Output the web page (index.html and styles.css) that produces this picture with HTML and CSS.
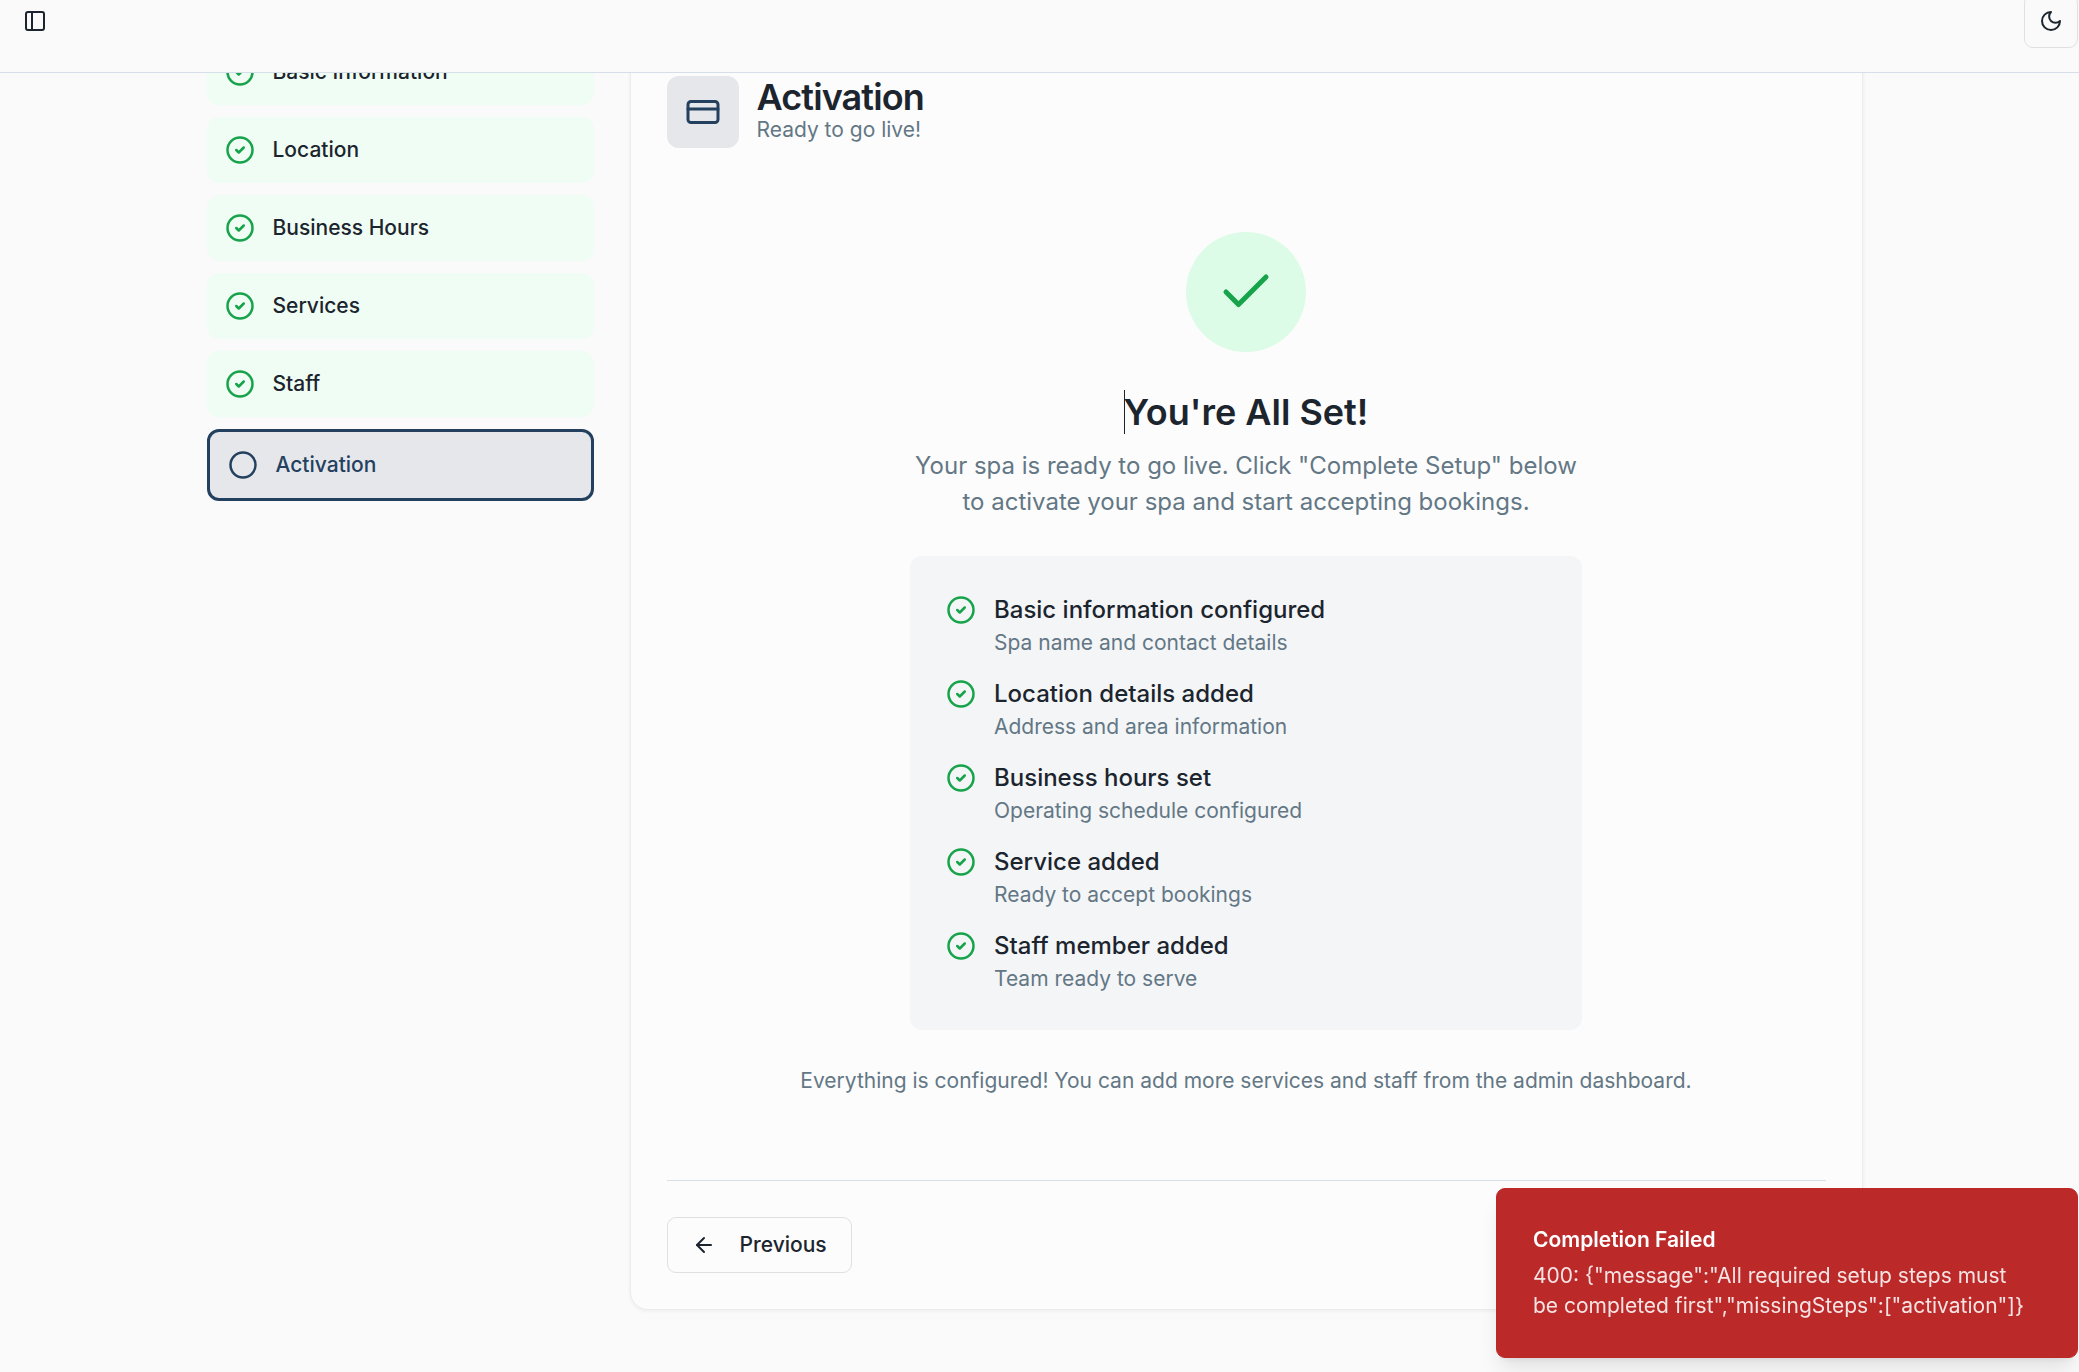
FILE: index.html
```html
<!DOCTYPE html>
<html lang="en">
<head>
<meta charset="utf-8">
<meta name="viewport" content="width=device-width, initial-scale=1">
<title>Spa Setup – Activation</title>
<link rel="stylesheet" href="styles.css">
</head>
<body>
<svg class="sprite" aria-hidden="true">
  <symbol id="i-check-circle" viewBox="0 0 24 24"><circle cx="12" cy="12" r="10"/><path d="m9 12 2 2 4-4"/></symbol>
  <symbol id="i-circle" viewBox="0 0 24 24"><circle cx="12" cy="12" r="10"/></symbol>
  <symbol id="i-check" viewBox="0 0 24 24"><path d="M20 6 9 17l-5-5"/></symbol>
  <symbol id="i-card" viewBox="0 0 24 24"><rect width="20" height="14" x="2" y="5" rx="2"/><path d="M2 10h20"/></symbol>
  <symbol id="i-panel" viewBox="0 0 24 24"><rect width="18" height="18" x="3" y="3" rx="2"/><path d="M9 3v18"/></symbol>
  <symbol id="i-moon" viewBox="0 0 24 24"><path d="M12 3a6 6 0 0 0 9 9 9 9 0 1 1-9-9Z"/></symbol>
  <symbol id="i-arrow-left" viewBox="0 0 24 24"><path d="m12 19-7-7 7-7"/><path d="M19 12H5"/></symbol>
</svg>

<header class="topbar">
  <button class="icon-btn" type="button" aria-label="Toggle sidebar"><svg class="icon icon-sm"><use href="#i-panel"/></svg></button>
  <button class="icon-btn icon-btn-outline" type="button" aria-label="Toggle theme"><svg class="icon icon-sm"><use href="#i-moon"/></svg></button>
</header>

<main class="viewport">
  <div class="wizard">
    <nav class="steps" aria-label="Setup steps">
      <button class="step" type="button"><svg class="icon"><use href="#i-check-circle"/></svg><span>Basic Information</span></button>
      <button class="step" type="button"><svg class="icon"><use href="#i-check-circle"/></svg><span>Location</span></button>
      <button class="step" type="button"><svg class="icon"><use href="#i-check-circle"/></svg><span>Business Hours</span></button>
      <button class="step" type="button"><svg class="icon"><use href="#i-check-circle"/></svg><span>Services</span></button>
      <button class="step" type="button"><svg class="icon"><use href="#i-check-circle"/></svg><span>Staff</span></button>
      <button class="step step-current" type="button" aria-current="step"><svg class="icon"><use href="#i-circle"/></svg><span>Activation</span></button>
    </nav>

    <section class="card">
      <div class="card-head">
        <div class="card-badge"><svg class="icon icon-md"><use href="#i-card"/></svg></div>
        <div>
          <h1 class="card-title">Activation</h1>
          <p class="small">Ready to go live!</p>
        </div>
      </div>

      <div class="summary">
        <div class="success"><svg class="icon icon-xl"><use href="#i-check"/></svg></div>
        <h2 class="summary-title"><span class="caret"></span>You're All Set!</h2>
        <p class="lead">Your spa is ready to go live. Click "Complete Setup" below to activate your spa and start accepting bookings.</p>
        <ul class="checklist">
          <li class="check-item"><svg class="icon"><use href="#i-check-circle"/></svg><div><p class="check-title">Basic information configured</p><p class="small">Spa name and contact details</p></div></li>
          <li class="check-item"><svg class="icon"><use href="#i-check-circle"/></svg><div><p class="check-title">Location details added</p><p class="small">Address and area information</p></div></li>
          <li class="check-item"><svg class="icon"><use href="#i-check-circle"/></svg><div><p class="check-title">Business hours set</p><p class="small">Operating schedule configured</p></div></li>
          <li class="check-item"><svg class="icon"><use href="#i-check-circle"/></svg><div><p class="check-title">Service added</p><p class="small">Ready to accept bookings</p></div></li>
          <li class="check-item"><svg class="icon"><use href="#i-check-circle"/></svg><div><p class="check-title">Staff member added</p><p class="small">Team ready to serve</p></div></li>
        </ul>
        <p class="small">Everything is configured! You can add more services and staff from the admin dashboard.</p>
      </div>

      <div class="card-foot">
        <button class="btn" type="button"><svg class="icon icon-sm"><use href="#i-arrow-left"/></svg>Previous</button>
      </div>
    </section>
  </div>
</main>

<div class="toast" role="alert">
  <p class="toast-title">Completion Failed</p>
  <p class="toast-text">400: {"message":"All required setup steps must be completed first","missingSteps":["activation"]}</p>
</div>
</body>
</html>
```
FILE: styles.css
```css
:root {
  --bg: #fafafa;
  --card: #fcfcfc;
  --text: #1c252e;
  --muted: #637785;
  --primary: #23415f;
  --tint: #e6e7eb;
  --line: #d6dfe7;
  --edge: #e0e0e0;
  --green: #16a34a;
}

*, *::before, *::after { box-sizing: border-box; }

body {
  margin: 0;
  height: 100vh;
  display: flex;
  flex-direction: column;
  overflow: hidden;
  background: var(--bg);
  color: var(--text);
  font: 400 24px/36px Inter, "Liberation Sans", sans-serif;
}

h1, h2, p, ul { margin: 0; padding: 0; }
ul { list-style: none; }
button { font: inherit; color: inherit; cursor: pointer; }

.sprite { display: none; }

.icon {
  flex: none;
  width: 30px;
  height: 30px;
  fill: none;
  stroke: currentColor;
  stroke-width: 2;
  stroke-linecap: round;
  stroke-linejoin: round;
}
.icon-sm { width: 24px; height: 24px; }
.icon-md { width: 36px; height: 36px; }
.icon-xl { width: 60px; height: 60px; }

.small {
  font-size: 21px;
  line-height: 30px;
  color: var(--muted);
}

.topbar {
  flex: none;
  display: flex;
  align-items: center;
  justify-content: space-between;
  margin-top: -6px;
  padding: 0 1px 24px 8px;
  border-bottom: 1px solid var(--line);
}
.icon-btn {
  display: grid;
  place-items: center;
  width: 54px;
  height: 54px;
  padding: 0;
  border: 1px solid transparent;
  border-radius: 9px;
  background: none;
}
.icon-btn-outline { border-color: var(--edge); }

.viewport {
  flex: 1;
  min-height: 0;
  overflow: hidden;
  padding-right: 10px;
}
.wizard {
  display: grid;
  grid-template-columns: repeat(4, minmax(0, 1fr));
  gap: 36px;
  align-items: start;
  max-width: 1728px;
  margin: -34px auto 0;
  padding: 0 36px;
}

.steps {
  display: flex;
  flex-direction: column;
  gap: 12px;
}
.step {
  display: flex;
  align-items: center;
  gap: 18px;
  padding: 18px;
  border: 0;
  border-radius: 12px;
  background: #f0fdf4;
  font-size: 21px;
  font-weight: 500;
  line-height: 30px;
  text-align: left;
}
.step .icon { color: var(--green); }
.step-current {
  border: 3px solid var(--primary);
  background: var(--tint);
  color: var(--primary);
}
.step-current .icon { color: inherit; }

.card {
  grid-column: span 3;
  padding: 36px;
  border: 1px solid #ececec;
  border-radius: 18px;
  background: var(--card);
  box-shadow: 0 1px 4px rgba(0, 0, 0, 0.06);
}
.card-head {
  display: flex;
  align-items: center;
  gap: 18px;
}
.card-badge {
  display: grid;
  place-items: center;
  width: 72px;
  height: 72px;
  border-radius: 12px;
  background: var(--tint);
  color: var(--primary);
}
.card-title {
  font-size: 36px;
  font-weight: 600;
  line-height: 36px;
  letter-spacing: -0.025em;
}

.summary {
  display: flex;
  flex-direction: column;
  align-items: center;
  padding: 84px 0;
  text-align: center;
}
.success {
  display: grid;
  place-items: center;
  width: 120px;
  height: 120px;
  margin-bottom: 36px;
  border-radius: 50%;
  background: #dcfce7;
  color: var(--green);
}
.summary-title {
  position: relative;
  margin-bottom: 12px;
  font-size: 36px;
  font-weight: 600;
  line-height: 48px;
}
.caret {
  position: absolute;
  top: 2px;
  left: 0;
  width: 1px;
  height: 44px;
  background: var(--text);
}
.lead {
  max-width: 672px;
  color: var(--muted);
}
.checklist {
  display: flex;
  flex-direction: column;
  gap: 18px;
  width: 100%;
  max-width: 672px;
  margin: 36px 0;
  padding: 36px;
  border-radius: 12px;
  background: #f3f5f7;
  text-align: left;
}
.check-item {
  display: flex;
  align-items: flex-start;
  gap: 18px;
}
.check-item .icon {
  margin-top: 3px;
  color: var(--green);
}
.check-title { font-weight: 500; }

.card-foot {
  display: flex;
  padding-top: 36px;
  border-top: 1px solid var(--line);
}
.btn {
  display: flex;
  align-items: center;
  gap: 24px;
  padding: 12px 24px;
  border: 1px solid var(--edge);
  border-radius: 9px;
  background: none;
  font-size: 21px;
  font-weight: 500;
  line-height: 30px;
}

.toast {
  position: fixed;
  right: 1px;
  bottom: 14px;
  width: 582px;
  max-width: 100%;
  padding: 36px 48px 36px 36px;
  border: 1px solid #bc2828;
  border-radius: 9px;
  background: #bc2929;
  box-shadow: 0 15px 22px -5px rgba(0, 0, 0, 0.1), 0 6px 9px -6px rgba(0, 0, 0, 0.1);
  color: #fff;
  font-size: 21px;
  line-height: 30px;
}
.toast-title {
  margin-bottom: 6px;
  font-weight: 600;
}
.toast-text { opacity: 0.87; }
```
